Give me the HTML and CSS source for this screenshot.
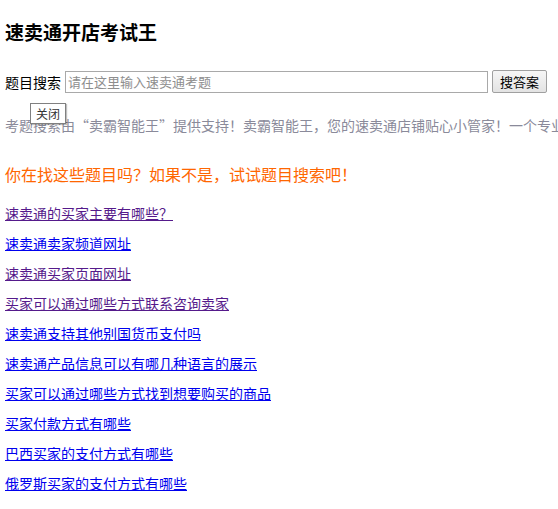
FILE: index.html
```html
<!DOCTYPE html>
<html lang="zh-CN">
<head>
<meta charset="utf-8">
<title>速卖通开店考试王</title>
<link rel="stylesheet" href="styles.css">
</head>
<body>
<div class="page">
  <h1 class="title">速卖通开店考试王</h1>
  <form class="search">
    <label class="search-label">题目搜索</label>
    <input class="search-input" type="text" placeholder="请在这里输入速卖通考题">
    <button class="search-btn" type="button">搜答案</button>
  </form>
  <div class="notice-wrap">
    <p class="notice">考题搜索由“卖霸智能王”提供支持！卖霸智能王，您的速卖通店铺贴心小管家！一个专业的速卖通店铺管理工具</p>
    <span class="tip">关闭</span>
  </div>
  <h2 class="hint">你在找这些题目吗？如果不是，试试题目搜索吧！</h2>
  <ul class="links">
    <li><a class="visited" href="#">速卖通的买家主要有哪些？</a></li>
    <li><a href="#">速卖通卖家频道网址</a></li>
    <li><a class="visited" href="#">速卖通买家页面网址</a></li>
    <li><a class="visited" href="#">买家可以通过哪些方式联系咨询卖家</a></li>
    <li><a href="#">速卖通支持其他别国货币支付吗</a></li>
    <li><a href="#">速卖通产品信息可以有哪几种语言的展示</a></li>
    <li><a href="#">买家可以通过哪些方式找到想要购买的商品</a></li>
    <li><a href="#">买家付款方式有哪些</a></li>
    <li><a href="#">巴西买家的支付方式有哪些</a></li>
    <li><a href="#">俄罗斯买家的支付方式有哪些</a></li>
  </ul>
</div>
</body>
</html>
```
FILE: styles.css
```css
html, body {
  margin: 0;
  padding: 0;
  background: #fff;
  overflow: hidden;
}
body {
  font-family: "Noto Sans CJK SC", "Liberation Sans", sans-serif;
  font-size: 14px;
  color: #000;
}
.page {
  padding: 0 5px;
}
.title {
  margin: 19px 0 0;
  font-size: 19px;
  line-height: 25px;
  font-weight: bold;
}
.search {
  display: flex;
  align-items: center;
  gap: 4px;
  margin: 26px 0 0;
  height: 23px;
}
.search-label {
  font-size: 14px;
  line-height: 20px;
}
.search-input {
  box-sizing: border-box;
  width: 423px;
  height: 22px;
  margin: 0;
  padding: 0 2px;
  border: 1px solid #a9a9a9;
  font-family: inherit;
  font-size: 13px;
  color: #000;
}
.search-input::placeholder {
  color: #8e8e8e;
}
.search-btn {
  box-sizing: border-box;
  width: 55px;
  height: 23px;
  margin: 0;
  padding: 0;
  border: 1px solid #a0a0a0;
  border-radius: 2px;
  background: linear-gradient(#f6f6f6, #e3e3e3);
  font-family: inherit;
  font-size: 13px;
  color: #000;
}
.notice-wrap {
  position: relative;
  margin: 22px -5px 0 0;
}
.notice {
  margin: 0;
  white-space: nowrap;
  overflow: hidden;
  font-size: 14px;
  line-height: 20px;
  color: #8a8a9a;
}
.tip {
  position: absolute;
  left: 25px;
  top: -12px;
  box-sizing: border-box;
  width: 36px;
  height: 21px;
  border: 1px solid #808080;
  background: #fff;
  box-shadow: 1px 1px 1px rgba(0,0,0,0.25);
  font-size: 12px;
  line-height: 19px;
  text-align: center;
  color: #333;
}
.hint {
  margin: 28px 0 0;
  font-size: 16px;
  line-height: 22px;
  font-weight: normal;
  color: #ff6600;
}
.links {
  list-style: none;
  margin: 18px 0 0;
  padding: 0;
  display: flex;
  flex-direction: column;
  gap: 10px;
}
.links li {
  line-height: 20px;
  font-size: 14px;
}
.links a {
  color: #0000ee;
  text-decoration: underline;
}
.links a.visited {
  color: #551a8b;
}
```
